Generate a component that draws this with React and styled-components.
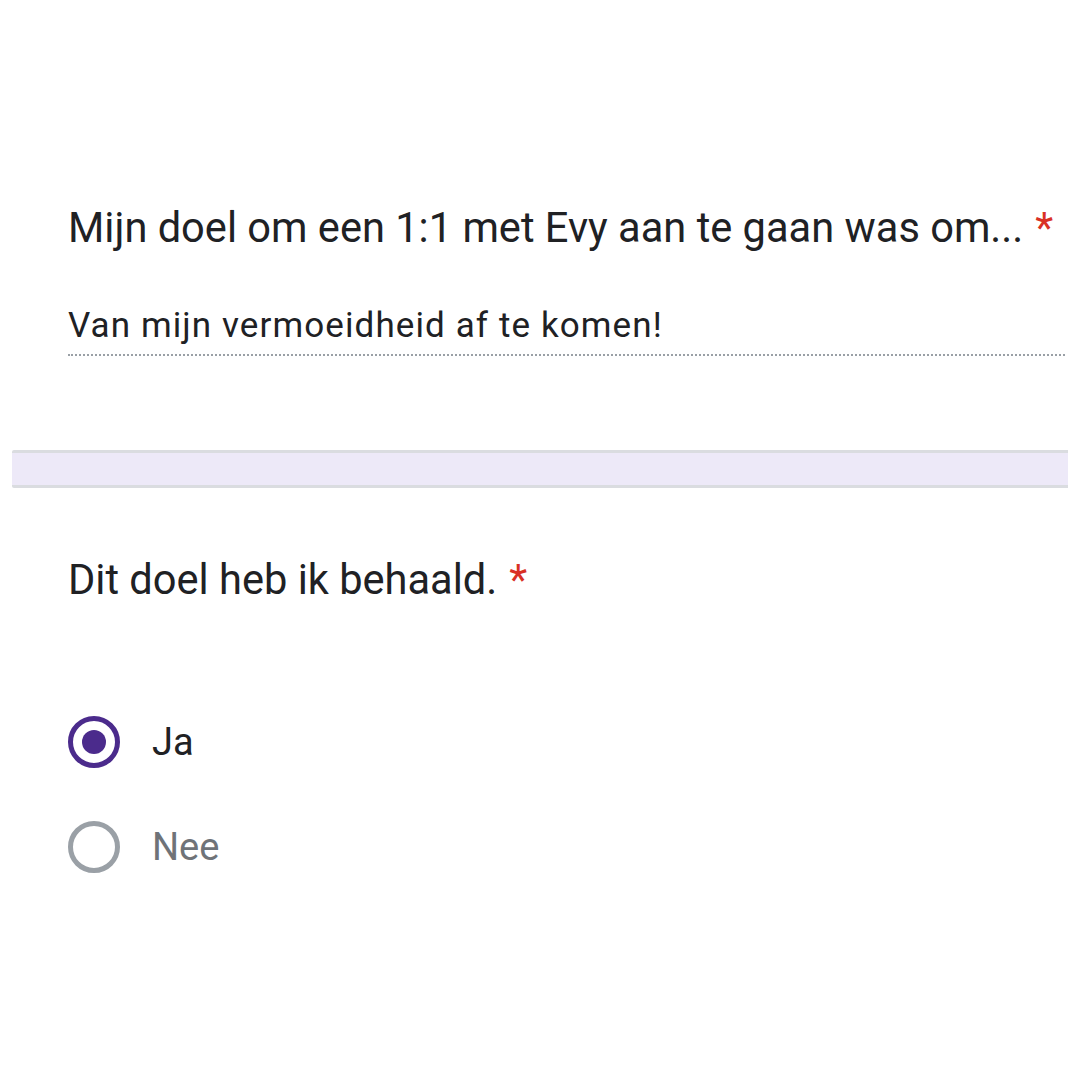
import React from 'react';
import styled, { createGlobalStyle } from 'styled-components';

const GlobalStyle = createGlobalStyle`
  html, body {
    margin: 0;
    padding: 0;
    background: #ffffff;
  }
  body {
    font-family: Roboto, "Noto Sans", Arial, sans-serif;
    color: #202124;
  }
`;

const Page = styled.div`
  width: 1080px;
  height: 1080px;
  overflow: hidden;
  background: #ffffff;
`;

const Card = styled.section`
  padding: ${(p) => p.$pad};
`;

const Question = styled.div`
  font-size: 41.6px;
  line-height: 48px;
  color: #202124;
  white-space: nowrap;
`;

const Required = styled.span`
  color: #d93025;
  margin-left: 12px;
`;

const Answer = styled.div`
  margin-top: 54px;
  font-size: 35px;
  line-height: 40px;
  letter-spacing: 1.1px;
  padding-bottom: 8px;
  border-bottom: 2px dotted #9aa0a6;
  color: #202124;
  white-space: nowrap;
`;

const Spacer = styled.div`
  height: 94px;
`;

const Gap = styled.div`
  margin: 0 12px;
  height: 32px;
  background: #ede9f8;
  border-top: 3px solid #dadce0;
  border-bottom: 3px solid #dadce0;
  border-radius: 2px 0 0 2px;
`;

const Options = styled.div`
  margin-top: 112px;
  display: flex;
  flex-direction: column;
  gap: 53px;
`;

const Option = styled.label`
  display: flex;
  align-items: center;
  gap: 32px;
  font-size: 38px;
  color: ${(p) => (p.$checked ? '#202124' : '#6f7378')};
`;

const Radio = styled.span`
  box-sizing: border-box;
  width: 52px;
  height: 52px;
  border-radius: 50%;
  border: 5px solid ${(p) => (p.$checked ? '#4b2b8c' : '#9aa0a6')};
  display: flex;
  align-items: center;
  justify-content: center;

  &::after {
    content: '';
    width: 24px;
    height: 24px;
    border-radius: 50%;
    background: #4b2b8c;
    display: ${(p) => (p.$checked ? 'block' : 'none')};
  }
`;

export default function App() {
  return (
    <Page>
      <GlobalStyle />
      <Card $pad="204px 15px 0 68px">
        <Question>
          Mijn doel om een 1:1 met Evy aan te gaan was om...<Required>*</Required>
        </Question>
        <Answer>Van mijn vermoeidheid af te komen!</Answer>
      </Card>
      <Spacer />
      <Gap />
      <Card $pad="68px 15px 0 68px">
        <Question>
          Dit doel heb ik behaald.<Required>*</Required>
        </Question>
        <Options>
          <Option $checked>
            <Radio $checked />
            Ja
          </Option>
          <Option>
            <Radio />
            Nee
          </Option>
        </Options>
      </Card>
    </Page>
  );
}
